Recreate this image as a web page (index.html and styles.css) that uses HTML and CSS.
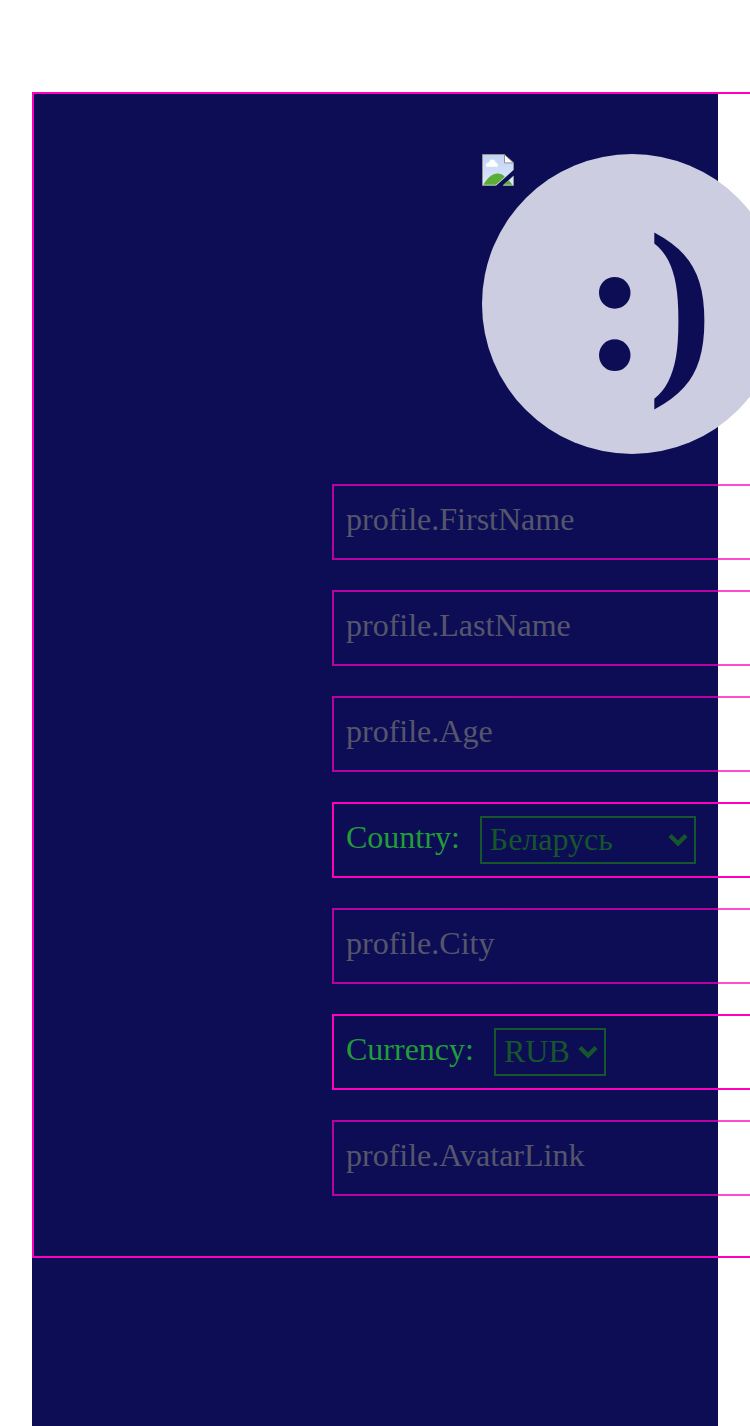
FILE: index.html
```html
<!DOCTYPE html>
<html lang="en">
<head>
<meta charset="utf-8">
<title>Profile</title>
<link rel="stylesheet" href="styles.css">
</head>
<body>
<main class="page">
  <section class="profile">
    <div class="avatar">
      <svg class="missing" viewBox="0 0 16 16" aria-hidden="true">
        <defs><linearGradient id="sky" gradientUnits="userSpaceOnUse" x1="0" y1="0" x2="0" y2="16"><stop offset="0" stop-color="#c1d4f5"/><stop offset="1" stop-color="#dde8fa"/></linearGradient></defs>
        <path fill="url(#sky)" d="M.25.25h10.8l4.7 4.3v3.5L7.1 15.7H.25z"/>
        <path fill="url(#sky)" d="M15.75 10.9v4.85h-5.4z"/>
        <path fill="#fff" d="M2 6.4C1.7 5 2.6 4.2 3.6 4.3 3.9 2.4 6.4 2.2 6.8 4.2 7.9 4.4 8.2 5.5 7.9 6.4z"/>
        <path fill="#5aad35" d="M.7 15.4C3 11.5 5.5 9.7 7.9 9.8c1.3 0 2.5.6 3.5 1.6L7 15.4zM13.3 13.1c.8.7 1.4 1.5 1.9 2.3h-4.5z"/>
        <path fill="none" stroke="#929292" stroke-width=".5" d="M7 15.75H.25V.25h10.8l4.7 4.3v3.5M15.75 11v4.75h-5"/>
        <path fill="#fff" stroke="#929292" stroke-width=".5" d="M11.25.25v4.2h4.5z"/>
      </svg>
      <span class="smile">:)</span>
    </div>
    <div class="field muted">profile.FirstName</div>
    <div class="field muted">profile.LastName</div>
    <div class="field muted">profile.Age</div>
    <div class="field choice">
      <span>Country:</span>
      <div class="select country"><span>Беларусь</span>
        <svg class="arrow" viewBox="0 0 20 14"><path d="M2 2.5l8 8 8-8"/></svg></div>
    </div>
    <div class="field muted">profile.City</div>
    <div class="field choice">
      <span>Currency:</span>
      <div class="select currency"><span>RUB</span>
        <svg class="arrow" viewBox="0 0 20 14"><path d="M2 2.5l8 8 8-8"/></svg></div>
    </div>
    <div class="field muted">profile.AvatarLink</div>
  </section>
</main>
</body>
</html>
```

FILE: styles.css
```css
* { box-sizing: border-box; }
html, body { overflow: hidden; }
body {
  margin: 0;
  height: 1426px;
  padding: 92px 32px 0;
  background: #fff;
  font: 32px/36px "Liberation Serif", "Times New Roman", serif;
}
.page { height: 1334px; background: #0d0d56; }
.profile {
  display: flex;
  flex-direction: column;
  align-items: center;
  gap: 30px;
  width: 1200px;
  padding: 60px 0;
  border: 2px solid #ff00bf;
}
.avatar {
  position: relative;
  width: 300px;
  height: 300px;
  padding-left: 32px;
  border-radius: 50%;
  background: #cdcde1;
  color: #0d0d56;
  text-align: center;
}
.missing {
  position: absolute;
  left: 0;
  top: 0;
  width: 32px;
  height: 32px;
}
.smile { font-size: 195px; font-weight: 700; line-height: 297px; }
.field {
  display: flex;
  align-items: center;
  width: 600px;
  height: 76px;
  padding: 0 12px 6px;
  border: 2px solid #ff00bf;
}
.muted { color: #757575; opacity: .7; }
.choice { gap: 20px; padding-bottom: 0; color: #219c38; }
.choice > span { padding-bottom: 6px; }
.select {
  display: flex;
  align-items: center;
  justify-content: space-between;
  height: 48px;
  padding: 0 6px 0 8px;
  border: 2px solid #16562b;
  color: #16562b;
}
.select span { padding-bottom: 2px; }
.country { width: 216px; }
.currency { width: 112px; }
.arrow { width: 20px; height: 14px; fill: none; stroke: #16562b; stroke-width: 4.4; }
```
